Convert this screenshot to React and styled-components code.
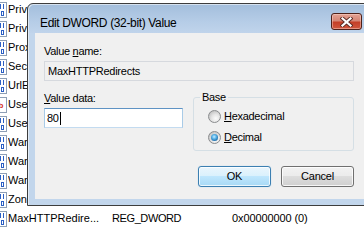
import React from "react";
import styled, { createGlobalStyle } from "styled-components";

const Global = createGlobalStyle`
  html, body { margin: 0; padding: 0; background: #fff; }
  body {
    width: 364px; height: 251px; overflow: hidden;
    font-family: "Liberation Sans", Arial, sans-serif;
    font-size: 11px; color: #000;
  }
`;

const Desktop = styled.div`
  position: relative;
  width: 364px;
  height: 251px;
  overflow: hidden;
  background: #fff;
`;

const ListView = styled.div`
  display: flex;
  flex-direction: column;
`;

const ListRow = styled.div`
  display: flex;
  align-items: center;
  height: 19px;
  line-height: 19px;
  white-space: nowrap;
`;

const RowIcon = styled.svg`
  flex: none;
  width: 16px;
  height: 16px;
  margin-left: -8px;
`;

const NameCell = styled.div`
  width: 104px;
  overflow: hidden;
  flex: none;
`;

const TypeCell = styled.div`
  width: 120px;
  flex: none;
  letter-spacing: -0.4px;
`;

const DataCell = styled.div`
  flex: none;
  letter-spacing: -0.1px;
`;

const Window = styled.div`
  position: absolute;
  left: 27px;
  top: 3px;
  width: 346px;
  height: 203px;
  box-sizing: border-box;
  border: 1px solid #3d3d3d;
  border-radius: 6px 6px 0 0;
  padding: 0 7px 6px 7px;
  display: flex;
  flex-direction: column;
  background: linear-gradient(#a3bedc 0px, #b6cde7 18px, #c0d4eb 29px, #c2d6ec 29px, #c2d6ec 100%);
  box-shadow: inset 1px 1px 0 rgba(255, 255, 255, 0.55), inset -1px 0 0 rgba(255, 255, 255, 0.55);
`;

const TitleBar = styled.div`
  height: 29px;
  display: flex;
  align-items: flex-start;
  justify-content: space-between;
  flex: none;
`;

const Title = styled.div`
  margin: 12px 0 0 5px;
  font-size: 12px;
  line-height: 14px;
  letter-spacing: -0.35px;
  white-space: nowrap;
`;

const CloseButton = styled.div`
  margin: 9px 3px 0 0;
  width: 31px;
  height: 17px;
  box-sizing: border-box;
  border: 1px solid #4e2119;
  border-radius: 3px;
  background: linear-gradient(#e3a294 0%, #d58675 45%, #c43f28 55%, #d0583f 100%);
  box-shadow: inset 0 0 0 1px rgba(255, 220, 210, 0.45);
  display: flex;
  align-items: center;
  justify-content: center;
`;

const Client = styled.div`
  flex: none;
  height: 166px;
  box-sizing: border-box;
  background: #f0f0f0;
  padding: 12px 0 0 9px;
  display: flex;
  flex-direction: column;
  letter-spacing: -0.3px;
`;

const FieldLabel = styled.div`
  height: 13px;
  line-height: 13px;
  white-space: nowrap;
`;

const Key = styled.span`
  text-decoration: underline;
  text-underline-offset: 1px;
`;

const NameBox = styled.div`
  margin-top: 3px;
  width: 310px;
  height: 20px;
  box-sizing: border-box;
  border: 1px solid #d6d9de;
  background: #f0f0f0;
  padding-left: 3px;
  line-height: 18px;
  letter-spacing: -0.25px;
  white-space: nowrap;
`;

const MidRow = styled.div`
  display: flex;
  align-items: flex-start;
  gap: 10px;
`;

const DataColumn = styled.div`
  width: 139px;
  margin-top: 11px;
  display: flex;
  flex-direction: column;
`;

const DataBox = styled.div`
  margin-top: 3px;
  width: 139px;
  height: 20px;
  box-sizing: border-box;
  border: 1px solid;
  border-color: #5f93c4 #a9cbe7 #c3dbf0 #a9cbe7;
  background: #fff;
  padding-left: 2px;
  display: flex;
  align-items: center;
  line-height: 18px;
`;

const Caret = styled.span`
  width: 1px;
  height: 13px;
  background: #000;
  margin-left: 1px;
`;

const GroupBox = styled.fieldset`
  margin: 10px 0 0 0;
  width: 161px;
  height: 60px;
  min-width: 0;
  box-sizing: border-box;
  border: 1px solid #d5dfe5;
  border-radius: 3px;
  padding: 6px 5px 5px 6px;
`;

const GroupLegend = styled.legend`
  padding: 0 2px;
  line-height: 13px;
  font-size: 11px;
`;

const RadioList = styled.div`
  margin-left: 8px;
  display: flex;
  flex-direction: column;
  gap: 8px;
`;

const RadioRow = styled.div`
  display: flex;
  align-items: center;
  gap: 3px;
  height: 13px;
  line-height: 13px;
  white-space: nowrap;
`;

const RadioCircle = styled.span`
  flex: none;
  width: 13px;
  height: 13px;
  box-sizing: border-box;
  border-radius: 50%;
  border: 1px solid #8a8c8e;
  background: radial-gradient(circle at 62% 68%, #fbfbfb 0%, #e6e6e6 40%, #c2c2c2 80%, #a9a9a9 100%);
  display: flex;
  align-items: center;
  justify-content: center;
`;

const RadioDot = styled.span`
  width: 7px;
  height: 7px;
  border-radius: 50%;
  background: radial-gradient(circle at 45% 40%, #c9ecff 0%, #5cb6ea 35%, #1d6ba8 75%, #0d3f6b 100%);
`;

const ButtonRow = styled.div`
  margin-top: 15px;
  width: 310px;
  display: flex;
  justify-content: flex-end;
  gap: 10px;
`;

const PushButton = styled.div`
  width: 73px;
  height: 21px;
  box-sizing: border-box;
  border-radius: 3px;
  border: 1px solid ${(p) => (p.$default ? "#3c7fb1" : "#707070")};
  background: ${(p) =>
    p.$default
      ? "linear-gradient(#eaf6fd 0%, #d9f0fc 50%, #bee6fd 50%, #a7d9f5 100%)"
      : "linear-gradient(#f2f2f2 0%, #ebebeb 50%, #dddddd 50%, #cfcfcf 100%)"};
  box-shadow: ${(p) =>
    p.$default
      ? "inset 0 0 0 1px rgba(255,255,255,0.75), 0 0 1px #8cc6ef"
      : "inset 0 0 0 1px rgba(255,255,255,0.8)"};
  text-align: center;
  line-height: 19px;
  letter-spacing: -0.2px;
`;

function DwordIcon() {
  return (
    <RowIcon viewBox="0 0 16 16">
      <rect x="1.5" y="0.5" width="13" height="15" fill="#fff" stroke="#8e9fb6" />
      <g fill="none" stroke="#2b5fc4" strokeWidth="1">
        <rect x="3.5" y="2.5" width="2" height="4" />
        <line x1="8.5" y1="2" x2="8.5" y2="7" />
        <line x1="11.5" y1="2" x2="11.5" y2="7" />
        <line x1="4.5" y1="9" x2="4.5" y2="14" />
        <line x1="7.5" y1="9" x2="7.5" y2="14" />
        <rect x="9.5" y="9.5" width="2" height="4" />
      </g>
    </RowIcon>
  );
}

function StringIcon() {
  return (
    <RowIcon viewBox="0 0 16 16">
      <rect x="1.5" y="0.5" width="13" height="15" fill="#fff" stroke="#8e9fb6" />
      <text x="2" y="11" fontSize="8" fontFamily="Liberation Sans, Arial, sans-serif" fill="#d4301a" fontWeight="bold">
        ab
      </text>
    </RowIcon>
  );
}

/* Rows above the last one lie behind the dialog: only their names peek out. */
const rows = [
  { name: "PrivacyAdvanced" },
  { name: "PrivDiscUiShown" },
  { name: "ProxyEnable" },
  { name: "SecureProtocols" },
  { name: "UrlEncoding" },
  { name: "User Agent", sz: true },
  { name: "UseSchannelDirectly" },
  { name: "WarnOnBadCertRecving" },
  { name: "WarnOnPostRedirect" },
  { name: "WarnonZoneCrossing" },
  { name: "ZonesSecurityUpgrade" },
  { name: "MaxHTTPRedire...", type: "REG_DWORD", data: "0x00000000 (0)" },
];

function CloseGlyph() {
  return (
    <svg width="13" height="10" viewBox="0 0 13 10">
      <path d="M2.5 1.5 L10.5 8.5 M10.5 1.5 L2.5 8.5" stroke="#5a2b24" strokeWidth="4" strokeLinecap="square" />
      <path d="M2.5 1.5 L10.5 8.5 M10.5 1.5 L2.5 8.5" stroke="#ffffff" strokeWidth="2.2" strokeLinecap="square" />
    </svg>
  );
}

export default function App() {
  return (
    <>
      <Global />
      <Desktop>
        <ListView>
          {rows.map((r, i) => (
            <ListRow key={i}>
              {r.sz ? <StringIcon /> : <DwordIcon />}
              <NameCell>{r.name}</NameCell>
              {r.type && <TypeCell>{r.type}</TypeCell>}
              {r.data && <DataCell>{r.data}</DataCell>}
            </ListRow>
          ))}
        </ListView>

        <Window>
          <TitleBar>
            <Title>Edit DWORD (32-bit) Value</Title>
            <CloseButton>
              <CloseGlyph />
            </CloseButton>
          </TitleBar>
          <Client>
            <FieldLabel>
              Value <Key>n</Key>ame:
            </FieldLabel>
            <NameBox>MaxHTTPRedirects</NameBox>
            <MidRow>
              <DataColumn>
                <FieldLabel>
                  <Key>V</Key>alue data:
                </FieldLabel>
                <DataBox>
                  80
                  <Caret />
                </DataBox>
              </DataColumn>
              <GroupBox>
                <GroupLegend>Base</GroupLegend>
                <RadioList>
                  <RadioRow>
                    <RadioCircle />
                    <span>
                      <Key>H</Key>exadecimal
                    </span>
                  </RadioRow>
                  <RadioRow>
                    <RadioCircle>
                      <RadioDot />
                    </RadioCircle>
                    <span>
                      <Key>D</Key>ecimal
                    </span>
                  </RadioRow>
                </RadioList>
              </GroupBox>
            </MidRow>
            <ButtonRow>
              <PushButton $default>OK</PushButton>
              <PushButton>Cancel</PushButton>
            </ButtonRow>
          </Client>
        </Window>
      </Desktop>
    </>
  );
}
